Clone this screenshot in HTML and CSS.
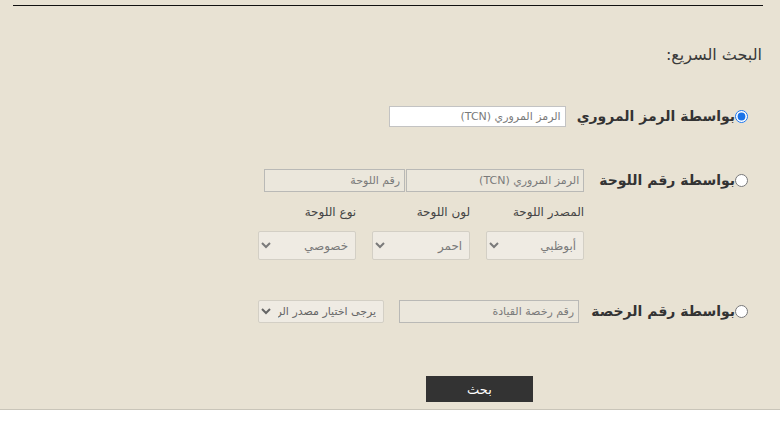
FILE: index.html
```html
<!DOCTYPE html>
<html lang="ar" dir="rtl">
<head>
<meta charset="utf-8">
<title>البحث السريع</title>
<link rel="stylesheet" href="styles.css">
</head>
<body>
<div class="panel">
  <div class="rule"></div>
  <h2 class="title">البحث السريع:</h2>

  <div class="row row-1">
    <input type="radio" name="mode" class="radio" checked>
    <label class="opt">بواسطة الرمز المروري</label>
    <input type="text" class="field field-tcn" placeholder="الرمز المروري (TCN)">
  </div>

  <div class="row row-2">
    <input type="radio" name="mode" class="radio">
    <label class="opt">بواسطة رقم اللوحة</label>
    <div class="plate">
      <div class="plate-inputs">
        <input type="text" class="field off field-tcn2" placeholder="الرمز المروري (TCN)" disabled>
        <input type="text" class="field off field-plate" placeholder="رقم اللوحة" disabled>
      </div>
      <div class="plate-grid">
        <div class="cell">
          <span class="cap">المصدر اللوحة</span>
          <select class="sel"><option>أبوظبي</option></select>
        </div>
        <div class="cell">
          <span class="cap">لون اللوحة</span>
          <select class="sel"><option>احمر</option></select>
        </div>
        <div class="cell">
          <span class="cap">نوع اللوحة</span>
          <select class="sel"><option>خصوصي</option></select>
        </div>
      </div>
    </div>
  </div>

  <div class="row row-3">
    <input type="radio" name="mode" class="radio">
    <label class="opt">بواسطة رقم الرخصة</label>
    <input type="text" class="field off field-lic" placeholder="رقم رخصة القيادة" disabled>
    <select class="sel sel-src"><option>يرجى اختيار مصدر الرخصة</option></select>
  </div>

  <div class="actions">
    <button type="button" class="btn">بحث</button>
  </div>
</div>
</body>
</html>
```

FILE: styles.css
```css
html, body {
  margin: 0;
  padding: 0;
  background: #ffffff;
}
body {
  font-family: "DejaVu Sans", "Noto Sans", sans-serif;
  color: #333;
}
.panel {
  background: #e8e2d3;
  height: 410px;
  border-bottom: 1px solid #c9c5b9;
  padding-top: 5px;
  box-sizing: border-box;
  overflow: hidden;
}
.rule {
  height: 1px;
  background: #111;
  margin: 0 17px 0 13px;
}
.title {
  margin: 39px 18px 0 0;
  font-size: 16px;
  font-weight: normal;
  line-height: 20px;
  color: #3a3a3a;
}
.row {
  display: flex;
  align-items: flex-start;
  margin-right: 32px;
}
.row-1 { margin-top: 40px; height: 22px; align-items: center; }
.row-2 { margin-top: 42px; }
.row-3 { margin-top: 40px; height: 22px; align-items: center; }
.radio {
  margin: 0;
  width: 13px;
  height: 13px;
  accent-color: #1a73e8;
  flex: none;
}
.row-2 .radio { margin-top: 5px; }
.opt {
  font-size: 14px;
  font-weight: bold;
  color: #333;
  line-height: 22px;
  margin-left: 15px;
  white-space: nowrap;
}
.row-1 .opt { margin-left: 11px; }
.field {
  box-sizing: border-box;
  height: 21px;
  border: 1px solid #c3c3c3;
  background: #fff;
  font-family: "DejaVu Sans", sans-serif;
  font-size: 11px;
  padding: 0 4px;
  color: #555;
  border-radius: 0;
  margin: 0;
}
.field::placeholder { color: #7a7a7a; }
.field.off {
  background: #ebe7dc;
  border-color: #b9b9b6;
  height: 23px;
}
.field-tcn { width: 177px; }
.field-tcn2 { width: 178px; }
.field-plate { width: 141px; margin-right: 1px; }
.field-lic { width: 180px; margin-right: -3px; }
.plate-inputs { display: flex; }
.plate-grid {
  display: grid;
  grid-template-columns: repeat(3, 98px);
  column-gap: 16px;
  margin-top: 12px;
}
.cell {
  display: flex;
  flex-direction: column;
  align-items: stretch;
}
.cap {
  font-size: 12px;
  line-height: 16px;
  color: #444;
  margin-bottom: 11px;
}
.sel {
  box-sizing: border-box;
  height: 29px;
  border: 1px solid #d3cfc5;
  background: #efebe3;
  color: #7a7a7a;
  font-family: "DejaVu Sans", sans-serif;
  font-size: 12px;
  border-radius: 2px;
  padding: 0 3px;
  margin: 0;
}
.sel-src {
  width: 126px;
  height: 23px;
  margin-right: 15px;
  color: #666;
  font-size: 11px;
}
.actions {
  margin-top: 54px;
  display: flex;
  padding-right: 247px;
}
.btn {
  width: 107px;
  height: 26px;
  background: #333333;
  color: #fff;
  border: 0;
  border-radius: 0;
  font-family: "DejaVu Sans", sans-serif;
  font-size: 13px;
  padding: 0;
  cursor: pointer;
}
```
